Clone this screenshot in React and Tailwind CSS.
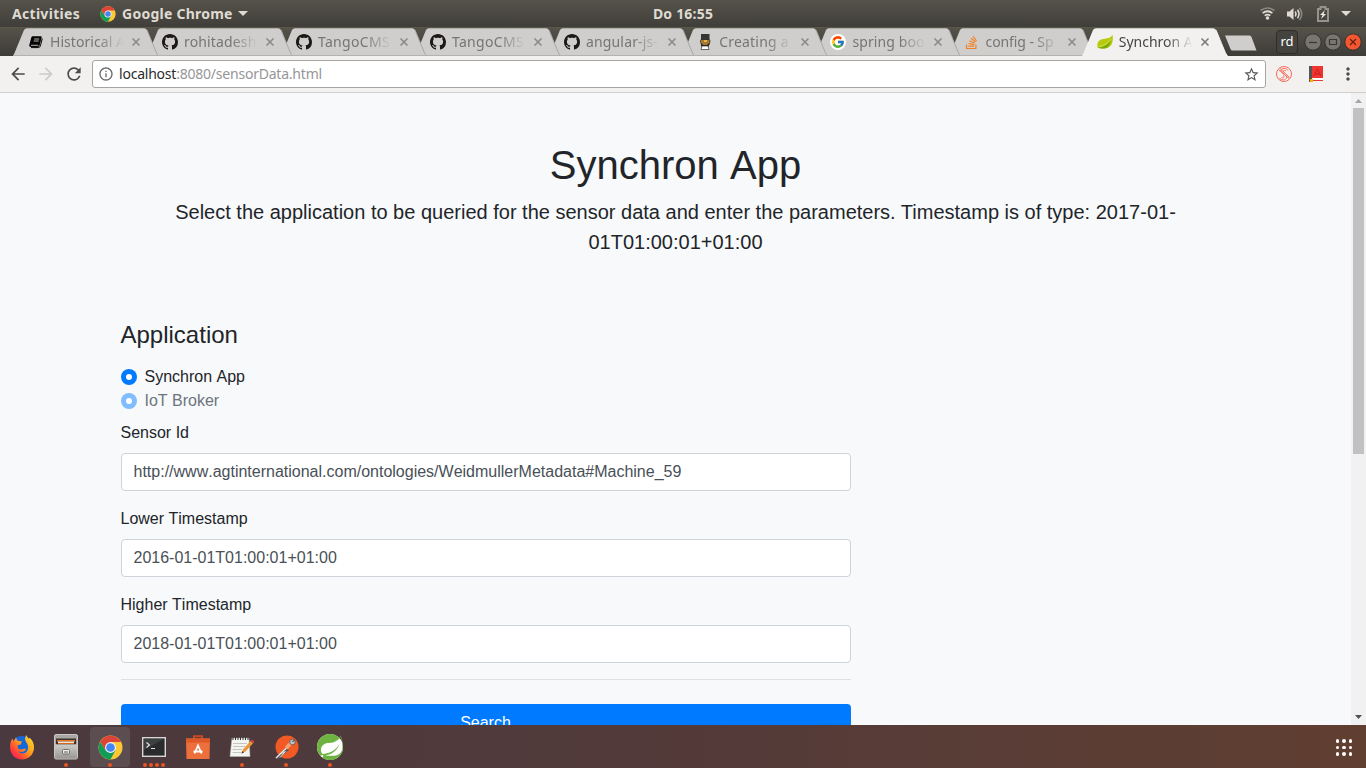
import React from "react";
import { MdArrowBack, MdArrowForward, MdRefresh, MdInfoOutline, MdStarBorder, MdMoreVert } from "react-icons/md";
import { FaStackOverflow } from "react-icons/fa";
import { FcGoogle } from "react-icons/fc";
import { SiSpring } from "react-icons/si";

function ChromeLogo({ className }) {
  return (
    <svg viewBox="0 0 48 48" className={className}>
      <circle cx="24" cy="24" r="23" fill="#fcc934" />
      <path d="M4.1 12.5A23 23 0 0 0 24 47L33.5 29.5 24 24 14.5 29.5z" fill="#0f9d58" />
      <path d="M4.1 12.5A23 23 0 0 1 43.9 12.5L44 13.5H24L14.5 29.5z" fill="#db4437" />
      <circle cx="24" cy="24" r="10.5" fill="#f5f5f5" />
      <circle cx="24" cy="24" r="8.3" fill="#4285f4" />
    </svg>
  );
}

function Lantern() {
  return (
    <svg viewBox="0 0 16 16" className="size-4">
      <path d="M4 0h8.500v5l1 2-1 4H4L3 7l1-2z" fill="#353535" />
      <path d="M4 6h8.500v3l-2 2H6L4 9z" fill="#a8782b" />
      <path d="M7 6h3v2H7z" fill="#e2b24e" />
      <path d="M4 9l2 2h4l2-2v3l-1 1H5l-1-1z" fill="#2d2b28" />
      <path d="M5 12h6l1 3.500H4z" fill="#fff" stroke="#333" strokeWidth=".7" />
    </svg>
  );
}

function Leaf() {
  return (
    <svg viewBox="0 0 16 16" className="size-4">
      <path d="M15.5.8C16.8 8 14.5 14 8 14.5c-3 .3-5.500-.2-7.500-1C-.5 7 3 5 8 4.700 11.500 4.500 14 3.500 15.500.8z" fill="#b8ca10" />
      <path d="M.5 13.500C5 13.500 11 11 14 5.500c-.5 5-3 8.700-7 9-3 .2-4.500-.2-6.500-1z" fill="#79a80c" />
      <path d="M1.500 12.500C7 12 11 9.500 14 5" fill="none" stroke="#dce75c" strokeWidth=".8" />
    </svg>
  );
}

function BookFavicon() {
  return (
    <svg viewBox="0 0 16 16" className="size-4">
      <path d="M5 2.200h7.600c.8 0 1.300.6 1.100 1.400l-2.100 8c-.2.8-.9 1.300-1.700 1.300H3c-1.300 0-2-.8-1.700-2l2-7.400C3.500 2.700 4.200 2.200 5 2.200z" fill="#050505" />
      <path d="M6.200 5h5M5.700 7h5M3 11.300h7.200" fill="none" stroke="#d0cecb" strokeWidth=".9" />
      <path d="M14.300 4.600l-1.900 7.200c-.3 1.200-1 1.800-2.200 1.800H3" fill="none" stroke="#050505" />
    </svg>
  );
}

const GoogleFavicon = () => (
  <span className="flex size-4 shrink-0 items-center justify-center rounded-full bg-white">
    <FcGoogle className="size-[14px]" />
  </span>
);
const Octocat = () => (
  <svg viewBox="0 0 16 16" className="size-4" fill="#1b1817">
    <path d="M8 0C3.58 0 0 3.58 0 8c0 3.54 2.29 6.53 5.47 7.59.4.07.55-.17.55-.38 0-.19-.01-.82-.01-1.49-2.01.37-2.53-.49-2.69-.94-.09-.23-.48-.94-.82-1.13-.28-.15-.68-.52-.01-.53.63-.01 1.08.58 1.23.82.72 1.21 1.87.87 2.33.66.07-.52.28-.87.51-1.07-1.78-.2-3.64-.89-3.64-3.95 0-.87.31-1.59.82-2.15-.08-.2-.36-1.02.08-2.12 0 0 .67-.21 2.2.82.64-.18 1.32-.27 2-.27.68 0 1.36.09 2 .27 1.53-1.04 2.2-.82 2.2-.82.44 1.1.16 1.92.08 2.12.51.56.82 1.27.82 2.15 0 3.07-1.87 3.75-3.65 3.95.29.25.54.73.54 1.48 0 1.07-.01 1.93-.01 2.2 0 .21.15.46.55.38A8.01 8.01 0 0 0 16 8c0-4.42-3.58-8-8-8z" />
  </svg>
);
const Stack = () => (
  <span className="relative flex size-4 items-end justify-center">
    <FaStackOverflow className="size-[15px] text-[#f48024]" />
  </span>
);

const tabs = [
  { title: "Historical A", Icon: BookFavicon, z: "z-[9]", width: "w-[134px]", spacing: "tracking-[0.05px]" },
  { title: "rohitadesh", Icon: Octocat, z: "z-[8]", width: "w-[134px]", spacing: "tracking-[0.15px]" },
  { title: "TangoCMS", Icon: Octocat, z: "z-[7]", width: "w-[134px]", spacing: "tracking-[0.3px]" },
  { title: "TangoCMS", Icon: Octocat, z: "z-[6]", width: "w-[134px]", spacing: "tracking-[0.3px]" },
  { title: "angular-js-", Icon: Octocat, z: "z-[5]", width: "w-[133.2px]", spacing: "tracking-[0.15px]" },
  { title: "Creating a", Icon: Lantern, z: "z-[4]", width: "w-[133.2px]", spacing: "tracking-[0.2px]" },
  { title: "spring boo", Icon: GoogleFavicon, z: "z-[3]", width: "w-[133.2px]", spacing: "tracking-[0.1px]" },
  { title: "config - Sp", Icon: Stack, z: "z-[2]", width: "w-[133.2px]", spacing: "tracking-[-0.1px]" },
  { title: "Synchron A", Icon: Leaf, z: "z-[10]", width: "w-[133.2px]", active: true, spacing: "tracking-[0px]" },
];

function Tab({ title, Icon, z, width, active, spacing }) {
  return (
    <div className={`relative flex h-7 shrink-0 items-center pl-[15px] ${width} ${z}`}>
      <svg viewBox="0 0 146 28" className="absolute left-0 top-0 h-7 w-[146px]">
        <path d="M0 28L1.500 25 11 2Q12 .3 14 .3H131Q133 .3 134 2L143.500 25 145.500 28z" fill={active ? "#f2f1f0" : "#d0cecc"} />
        <path d="M134 2L143.500 25 145.500 28" fill="none" stroke={active ? "#f2f1f0" : "#aaa8a5"} />
        {!active && <path d="M0 27.500H146" stroke="#b4b2af" />}
      </svg>
      <span className="relative flex size-4 shrink-0 items-center justify-center"><Icon /></span>
      <span className={`relative ml-[6px] w-[82px] whitespace-nowrap text-[14px] leading-6 ${spacing} [mask-image:linear-gradient(to_right,black_58%,transparent_90%)] ${active ? "text-[#464646]" : "text-[#777573]"}`}>
        {title}
      </span>
      <svg viewBox="0 0 8 8" className="relative size-2 shrink-0">
        <path d="M.5.5l7 7M7.500.5l-7 7" stroke={active ? "#777" : "#8a8886"} strokeWidth="1.500" />
      </svg>
    </div>
  );
}

const Caret = ({ className }) => (
  <svg viewBox="0 0 10 5" className={`h-[5px] w-[10px] shrink-0 ${className}`}><path d="M0 0h10L5 5z" fill="#dfdbd2" /></svg>
);

function TopBar() {
  return (
    <div className="grid h-[27px] grid-cols-[1fr_auto_1fr] items-center bg-gradient-to-b from-[#56534b] to-[#403e39] text-[14px] font-bold text-[#dfdbd2]">
      <div className="flex items-center pl-3">
        <span className="w-[88px] tracking-[0.3px]">Activities</span>
        <ChromeLogo className="size-4" />
        <span className="ml-[6px] w-[111px] whitespace-nowrap tracking-[0.25px]">Google Chrome</span>
        <Caret className="ml-[5px]" />
      </div>
      <span className="pb-px text-[14px] tracking-[0.2px]">Do 16:55</span>
      <div className="flex items-center justify-end pr-[15px]">
        <svg viewBox="0 0 15 13" className="h-[13px] w-[15px]" fill="none" strokeWidth="1.700">
          <path d="M.7 3.500Q7.500-1.500 14.300 3.500" stroke="#8b8881" />
          <path d="M2.600 6.200Q7.500 2.300 12.400 6.200M4.700 8.700Q7.500 6.500 10.300 8.700" stroke="#dfdbd2" />
          <circle cx="7.500" cy="11" r="1.800" fill="#dfdbd2" />
        </svg>
        <svg viewBox="0 0 16 14" className="ml-[12px] h-[14px] w-4" fill="none" strokeWidth="1.500">
          <path d="M0 4.500h2.500L6.500 1v12L2.500 9.500H0z" fill="#dfdbd2" />
          <path d="M8.300 4.500q1.500 2.500 0 5M10.500 2.700q3 4.300 0 8.600" stroke="#dfdbd2" />
          <path d="M12.500 1q4.500 6 0 12" stroke="#8b8881" />
        </svg>
        <svg viewBox="0 0 12 16" className="ml-[14px] h-4 w-3">
          <path d="M1 3h2.500V1h5v2H11v12H1z" fill="none" stroke="#96938b" strokeWidth="2" />
          <path d="M8 4L3 9h2.500L4 13l5-5H6.500z" fill="#eeeae2" />
        </svg>
        <Caret className="ml-[12px]" />
      </div>
    </div>
  );
}

function WindowButton({ close, children }) {
  return (
    <svg viewBox="0 0 18 18" className="size-[18px]">
      <circle cx="9" cy="9" r="8.200" fill={close ? "#f4562f" : "#787570"} stroke="#35332f" />
      <g fill="none" stroke={close ? "#5e2111" : "#393732"} strokeWidth="1.200">{children}</g>
    </svg>
  );
}

function TabStrip() {
  return (
    <div className="flex h-[29px] items-end border-t border-[#5a574d] bg-gradient-to-b from-[#55524a] to-[#3e3c37] pl-[13px]">
      {tabs.map((t, i) => <Tab key={i} {...t} />)}
      <svg viewBox="0 0 33 16" className="mb-[5px] ml-[9px] h-4 w-[33px] shrink-0"><path d="M1 .5h24.500q1.500 0 2 1.500l5 13.500H8.500q-1.500 0-2-1.500z" fill="#d0cecc" /></svg>
      <div className="mb-[2px] ml-[19px] flex h-6 w-[22px] shrink-0 items-center justify-center rounded border border-[#2f2d29] bg-[#45433e] text-[13px] text-white">rd</div>
      <div className="mb-[5px] ml-[6px] flex gap-[2px]">
        <WindowButton><path d="M5 9.500h8" /></WindowButton>
        <WindowButton><path d="M5.500 6.500h7v5h-7z" /></WindowButton>
        <WindowButton close><path d="M6 6l6 6M12 6l-6 6" /></WindowButton>
      </div>
    </div>
  );
}

function Toolbar() {
  return (
    <div className="flex h-[37px] items-center border-b border-[#cfcecc] bg-[#f2f1f0] text-[#4b4b4b]">
      <MdArrowBack className="ml-[8px] size-5" />
      <MdArrowForward className="ml-[8px] size-5 text-[#cccbca]" />
      <MdRefresh className="ml-[8px] size-5" />
      <div className="ml-[8px] flex h-7 w-[1174px] items-center rounded-[3px] border border-[#a7a5a4] bg-white pl-[5px] text-[14px]">
        <MdInfoOutline className="size-4 text-[#6a6a6a]" />
        <span className="ml-[5px] pb-px tracking-[-0.22px] text-[#2c2c2c]">localhost<span className="text-[#969696]">:8080/sensorData.html</span></span>
        <MdStarBorder className="ml-auto mr-[5px] size-[17px] text-[#5a5a5a]" />
      </div>
      <svg viewBox="0 0 16 16" className="ml-[10px] size-4" fill="none" stroke="#fa6a59">
        <circle cx="8" cy="8" r="7.500" />
        <path d="M2.500 3.500l10.500 9M3.800 2.300l9.700 9.200M12 4.500C10.500 1.500 5.500 1.800 5 4.500S10.800 8.500 10.500 11.500s-5.500 3-7 .5M10 5C8 3.500 6.500 5 8 6.500M5.500 11.500c2 1 3-.5 2-2" />
      </svg>
      <svg viewBox="0 0 15 16" className="ml-[17px] h-4 w-[15px]">
        <path d="M0 0h3v16H0z" fill="#555" /><path d="M3 0h11v12H3z" fill="#f0342f" />
        <path d="M5 10L8.500 3 12 10M6 8h5" stroke="#c7211d" fill="none" />
        <path d="M3 12h10v3H3z" fill="#fff" /><path d="M3 14.500h11" stroke="#e53b33" /><path d="M1 13h3v3H1z" fill="#f5b300" />
      </svg>
      <MdMoreVert className="ml-[14px] size-5" />
    </div>
  );
}

function Radio({ label, disabled }) {
  return (
    <label className={`flex h-6 items-center ${disabled ? "text-[#6c757d]" : ""}`}>
      <span className={`mr-[8px] flex size-4 items-center justify-center rounded-full ${disabled ? "bg-[#80bdff]" : "bg-[#007bff]"}`}>
        <span className="size-[6px] rounded-full bg-white" />
      </span>
      {label}
    </label>
  );
}

function Field({ label, value }) {
  return (
    <div className="mb-4">
      <label className="mb-2 block leading-6">{label}</label>
      <input readOnly value={value} className="block h-[38px] w-full rounded border border-[#ced4da] bg-white px-3 text-base text-[#495057] outline-none" />
    </div>
  );
}

function Page() {
  return (
    <div className="flex h-[632px] overflow-hidden bg-[#f8f9fa]">
      <main className="min-w-0 flex-1 bg-[#f8f9fb] font-['Liberation_Sans',Arial,sans-serif] text-base text-[#212529]">
        <div className="mx-auto w-[1110px]">
          <div className="pb-16 pt-12 text-center">
            <h1 className="mb-2 text-[40px] leading-[48px] [font-kerning:none]">Synchron App</h1>
            <p className="text-xl leading-[30px]">
              Select the application to be queried for the sensor data and enter the parameters. Timestamp is of type: 2017-01-<br />01T01:00:01+01:00
            </p>
          </div>
          <form className="w-[730px] [font-kerning:none]">
            <h4 className="mb-4 h-7 text-2xl leading-7">Application</h4>
            <div className="mb-2">
              <Radio label="Synchron App" />
              <Radio label="IoT Broker" disabled />
            </div>
            <Field label="Sensor Id" value="http://www.agtinternational.com/ontologies/WeidmullerMetadata#Machine_59" />
            <Field label="Lower Timestamp" value="2016-01-01T01:00:01+01:00" />
            <Field label="Higher Timestamp" value="2018-01-01T01:00:01+01:00" />
            <hr className="mb-6 border-[#dfe0e2]" />
            <button type="button" className="h-[38px] w-full rounded bg-[#007bff] text-white">Search</button>
          </form>
        </div>
      </main>
      <div className="flex w-[15px] flex-col items-center bg-[#f1f1f1]">
        <svg viewBox="0 0 15 15" className="size-[15px] shrink-0"><path d="M4 10h7L7.500 6z" fill="#a3a3a3" /></svg>
        <div className="h-[346px] w-[11px] bg-[#c1c1c1]" />
        <svg viewBox="0 0 15 15" className="mt-auto size-[15px] shrink-0"><path d="M4 5h7L7.500 9z" fill="#505050" /></svg>
      </div>
    </div>
  );
}

const Firefox = () => (
  <svg viewBox="0 0 26 26" className="size-[26px]">
    <defs>
      <linearGradient id="fox" x1="1" y1="0" x2="0" y2="1"><stop offset="0" stopColor="#ffe52e" /><stop offset=".45" stopColor="#ff9a1c" /><stop offset=".75" stopColor="#ff3b3b" /><stop offset="1" stopColor="#e3158c" /></linearGradient>
    </defs>
    <circle cx="13" cy="13" r="11" fill="#1467d8" />
    <path d="M3.500 4.500l1 3L7 3.500l1.500 3.300 4.500.7-1.500 3-3 1 .5 3c3.500 2 6.500-.5 8 .5-1 3-5 4-8 2 4 5 11 2 10-5-.5-3-3-5-3-7L17 1l2.500 3.500 1.500-.5c3 3 4 6 4 9.500C25 20 20 25.500 13 25.500S1 20 1 13c0-4 1-6.500 2.500-8.500z" fill="url(#fox)" />
  </svg>
);
const Files = () => (
  <svg viewBox="0 0 24 26" className="h-[26px] w-6">
    <defs>
      <linearGradient id="drawer" x1="0" y1="0" x2="0" y2="1"><stop offset="0" stopColor="#cfcdca" /><stop offset="1" stopColor="#999794" /></linearGradient>
    </defs>
    <rect x=".5" y=".5" width="23" height="24.500" rx="1.500" fill="#a9a7a3" stroke="#c9c7c3" />
    <path d="M2 4.500h20v6H2z" fill="#3d332e" /><path d="M3 6h18v1.500H3z" fill="#e87722" /><path d="M4 7.500h16V9H4z" fill="#eee9df" /><path d="M4 9h16v1H4z" fill="#d9661e" />
    <path d="M1 10.500h22v14H1z" fill="url(#drawer)" /><rect x="8.500" y="15.500" width="7" height="4.500" rx="1" fill="#efeeeb" stroke="#6f6d6a" /><path d="M10 18h4" stroke="#555" />
  </svg>
);
const Terminal = () => (
  <svg viewBox="0 0 24 20" className="h-5 w-6">
    <rect x=".7" y=".7" width="22.600" height="18.600" fill="#292b2c" stroke="#d7d7d3" strokeWidth="1.400" /><path d="M2 2h20L2 13z" fill="#3c4041" /><path d="M4.500 5.500l3 2.500-3 2.500M9 11.500h4" fill="none" stroke="#e8e8e8" strokeWidth="1.100" />
  </svg>
);
const Software = () => (
  <svg viewBox="0 0 24 24" className="size-6">
    <path d="M8 5V1.200h8V5" fill="none" stroke="#c94a21" strokeWidth="2" /><path d="M0 3.500h24L23.500 24H.5z" fill="#ec6f3c" /><path d="M0 3.500h24v4H0z" fill="#df5826" />
    <path d="M8.500 18.500l3.500-8 3.500 8M7.500 16.500h9" fill="none" stroke="#fff" strokeWidth="1.800" />
  </svg>
);
const Notes = () => (
  <svg viewBox="0 0 26 22" className="h-[22px] w-[26px]">
    <path d="M3 2h17l1 18.500H1z" fill="#f4f4f1" stroke="#bbb" strokeWidth=".5" /><path d="M4 1v3M6.500 1v3M9 1v3M11.500 1v3M14 1v3M16.500 1v3M19 1v3" stroke="#333" /><path d="M4 7.500h14M4 10.500h12M3.500 13.500H13M3.500 16.500h9" stroke="#c4c4c2" />
    <path d="M12.500 17.500l1.500-4L21.500 5l2.500 2.300-7.500 8.200z" fill="#e99634" /><path d="M21.500 5L23 3.500l2.500 2.300L24 7.300z" fill="#db4141" /><path d="M12.500 17.500l1-2.500 1.500 1.500z" fill="#333" />
  </svg>
);
const Postman = () => (
  <svg viewBox="0 0 25 25" className="size-[25px]">
    <circle cx="13" cy="12" r="11.500" fill="#f15a24" /><path d="M1.500 23L12 12.500l3 2.500L4 24z" fill="#55585a" /><path d="M2 23L14 11.500" stroke="#eee" strokeWidth="1.300" /><path d="M11 11.500l5-5 2.500 2.500-5 5.500z" fill="#f9a070" />
    <circle cx="18.500" cy="7" r="2.800" fill="#bfc3c5" stroke="#55585a" strokeWidth=".8" /><path d="M18.500 7l2-2" stroke="#222" /><path d="M7 19l4.500-2.500L6 22.500" fill="none" stroke="#ddd" />
  </svg>
);
const SpringLogo = () => (
  <span className="flex size-[26px] items-center justify-center rounded-full bg-white"><SiSpring className="size-[26px] text-[#6db33f]" /></span>
);
const BigChrome = () => <ChromeLogo className="size-[25px]" />;

const dock = [
  { Icon: Firefox, dots: 0 }, { Icon: Files, dots: 1 }, { Icon: BigChrome, dots: 1, active: true }, { Icon: Terminal, dots: 4 },
  { Icon: Software, dots: 0 }, { Icon: Notes, dots: 1 }, { Icon: Postman, dots: 1 }, { Icon: SpringLogo, dots: 1 },
];

function Dock() {
  return (
    <div className="flex h-[43px] items-start justify-between bg-gradient-to-r from-[#4a393e] via-[#533a39] to-[#603f31]">
      <div className="flex gap-1 pl-[2px] pt-[2px]">
        {dock.map(({ Icon, dots, active }, i) => (
          <div key={i} className={`flex h-10 w-10 flex-col items-center rounded ${active ? "bg-[#5c4d51]" : ""}`}>
            <div className="flex h-10 shrink-0 items-center justify-center"><Icon /></div>
            <div className="-mt-[4px] flex gap-[2px]">
              {Array.from({ length: dots }, (_, n) => <span key={n} className="size-1 rounded-full bg-[#e95420]" />)}
            </div>
          </div>
        ))}
      </div>
      <div className="mr-[14px] mt-[14px] grid grid-cols-3 gap-[3px]">
        {Array.from({ length: 9 }, (_, n) => <span key={n} className="size-[3.5px] rounded-full bg-white" />)}
      </div>
    </div>
  );
}

export default function App() {
  return (
    <div className="h-[768px] w-[1366px] overflow-hidden font-['Noto_Sans','Open_Sans',sans-serif]">
      <TopBar />
      <TabStrip />
      <Toolbar />
      <Page />
      <Dock />
    </div>
  );
}
